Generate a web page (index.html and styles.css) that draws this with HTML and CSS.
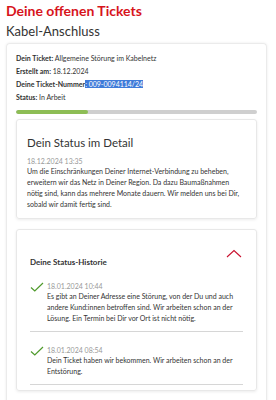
FILE: index.html
```html
<!DOCTYPE html>
<html lang="de">
  <head>
    <meta charset="UTF-8"/>
    <meta name="viewport" content="width=device-width, initial-scale=1.0">
    <link rel="stylesheet" href="styles.css">
    <title>Deine offenen Tickets</title>
  </head>
  <body>
    <h1 class="pageTitle">Deine offenen Tickets</h1>
    <h2 class="connectionTitle">Kabel-Anschluss</h2>
    <div class="ticketCard">
      <div class="ticketInfo">
        <p><b>Dein Ticket:</b> Allgemeine Störung im Kabelnetz</p>
        <p><b>Erstellt am:</b> 18.12.2024</p>
        <p><b>Deine Ticket-Nummer<span class="selected">: 009-0094114/24</span></b></p>
        <p><b>Status:</b> In Arbeit</p>
      </div>
      <div class="progressBar">
        <div class="progressBar_fill" style="width: 30%;"></div>
      </div>

      <div class="detailCard">
        <h3 class="detailCard_title">Dein Status im Detail</h3>
        <p class="detailCard_date">18.12.2024 13:35</p>
        <p class="detailCard_text">Um die Einschränkungen Deiner Internet-Verbindung zu beheben, erweitern wir das Netz in Deiner Region. Da dazu Baumaßnahmen nötig sind, kann das mehrere Monate dauern. Wir melden uns bei Dir, sobald wir damit fertig sind.</p>
      </div>

      <div class="historyCard">
        <div class="historyCard_header">
          <h3 class="historyCard_title">Deine Status-Historie</h3>
          <svg class="historyCard_chevron" width="16" height="9" viewBox="0 0 16 9">
            <path d="M1 8 L8 1.5 L15 8" fill="none" stroke="#c8102e" stroke-width="1.1"/>
          </svg>
        </div>
        <div class="historyItem">
          <svg class="historyItem_check" width="14" height="10" viewBox="0 0 14 10">
            <path d="M1 5.5 L4.8 9 L13 1" fill="none" stroke="#4f9a2c" stroke-width="1.2"/>
          </svg>
          <div class="historyItem_body">
            <p class="historyItem_date">18.01.2024 10:44</p>
            <p class="historyItem_text">Es gibt an Deiner Adresse eine Störung, von der Du und auch andere Kund:innen betroffen sind. Wir arbeiten schon an der Lösung. Ein Termin bei Dir vor Ort ist nicht nötig.</p>
          </div>
        </div>
        <div class="historyItem">
          <svg class="historyItem_check" width="14" height="10" viewBox="0 0 14 10">
            <path d="M1 5.5 L4.8 9 L13 1" fill="none" stroke="#4f9a2c" stroke-width="1.2"/>
          </svg>
          <div class="historyItem_body">
            <p class="historyItem_date">18.01.2024 08:54</p>
            <p class="historyItem_text">Dein Ticket haben wir bekommen. Wir arbeiten schon an der Entstörung.</p>
          </div>
        </div>
      </div>

      <div class="nextCard"></div>
    </div>
  </body>
</html>
```

FILE: styles.css
```css
body {
  margin: 0;
  padding: 0 9px 0 6px;
  font-family: Lato, "Open Sans", sans-serif;
  color: #333333;
  background-color: #ffffff;
  height: 400px;
  overflow: hidden;
}
p, h1, h2, h3 {
  margin: 0;
}
.pageTitle {
  margin-top: 2px;
  font-size: 14px;
  font-weight: bold;
  color: #d7141c;
  line-height: 18px;
}
.connectionTitle {
  margin-top: 3px;
  font-size: 13px;
  font-weight: normal;
  color: #333333;
  line-height: 17px;
}
.ticketCard {
  margin-top: 3px;
  border: 1px solid #ebebeb;
  border-bottom: none;
  border-radius: 4px 4px 0 0;
  box-shadow: 0 0 3px rgba(0, 0, 0, 0.08);
  padding: 8px 9px 0 9px;
}
  .ticketInfo p {
    font-size: 7px;
    line-height: 13px;
    color: #333333;
  }
  .ticketInfo b {
    font-weight: bold;
  }
  .selected {
    background-color: #3f7bd9;
    color: #ffffff;
    font-weight: normal;
  }
  .progressBar {
    margin-top: 6px;
    height: 4px;
    border-radius: 2px;
    background-color: #cfcfcf;
    overflow: hidden;
  }
    .progressBar_fill {
      height: 100%;
      border-radius: 2px;
      background-color: #8dbd55;
    }

.detailCard {
  margin-top: 5px;
  border: 1px solid #e8e8e8;
  border-radius: 3px;
  box-shadow: 0 1px 3px rgba(0, 0, 0, 0.08);
  padding: 16px 10px 8px 10px;
}
  .detailCard_title {
    font-size: 11.5px;
    font-weight: normal;
    line-height: 14px;
    color: #333333;
  }
  .detailCard_date {
    margin-top: 6px;
    font-size: 7px;
    line-height: 10px;
    color: #999999;
  }
  .detailCard_text {
    font-size: 7px;
    line-height: 11px;
    color: #333333;
  }

.historyCard {
  margin-top: 10px;
  border: 1px solid #e8e8e8;
  border-radius: 3px;
  box-shadow: 0 1px 3px rgba(0, 0, 0, 0.08);
  padding: 0 13px 5px 13px;
}
  .historyCard_header {
    display: flex;
    justify-content: space-between;
    align-items: flex-start;
    height: 51px;
  }
  .historyCard_title {
    margin-top: 27px;
    font-size: 8px;
    line-height: 10px;
    font-weight: bold;
    color: #333333;
  }
  .historyCard_chevron {
    margin-top: 19px;
    margin-right: 1px;
  }
  .historyItem {
    display: flex;
    gap: 3px;
    padding: 0 0 7px 0;
    margin-bottom: 13px;
    border-bottom: 1px solid #d6d6d6;
  }
  .historyItem:last-child {
    margin-bottom: 0;
  }
    .historyItem_check {
      flex-shrink: 0;
      margin-top: 1px;
    }
    .historyItem_date {
      font-size: 7px;
      line-height: 10px;
      color: #999999;
    }
    .historyItem_text {
      font-size: 7px;
      line-height: 11px;
      color: #333333;
    }

.nextCard {
  margin-top: 11px;
  height: 20px;
  border: 1px solid #e8e8e8;
  border-radius: 3px;
}
```
